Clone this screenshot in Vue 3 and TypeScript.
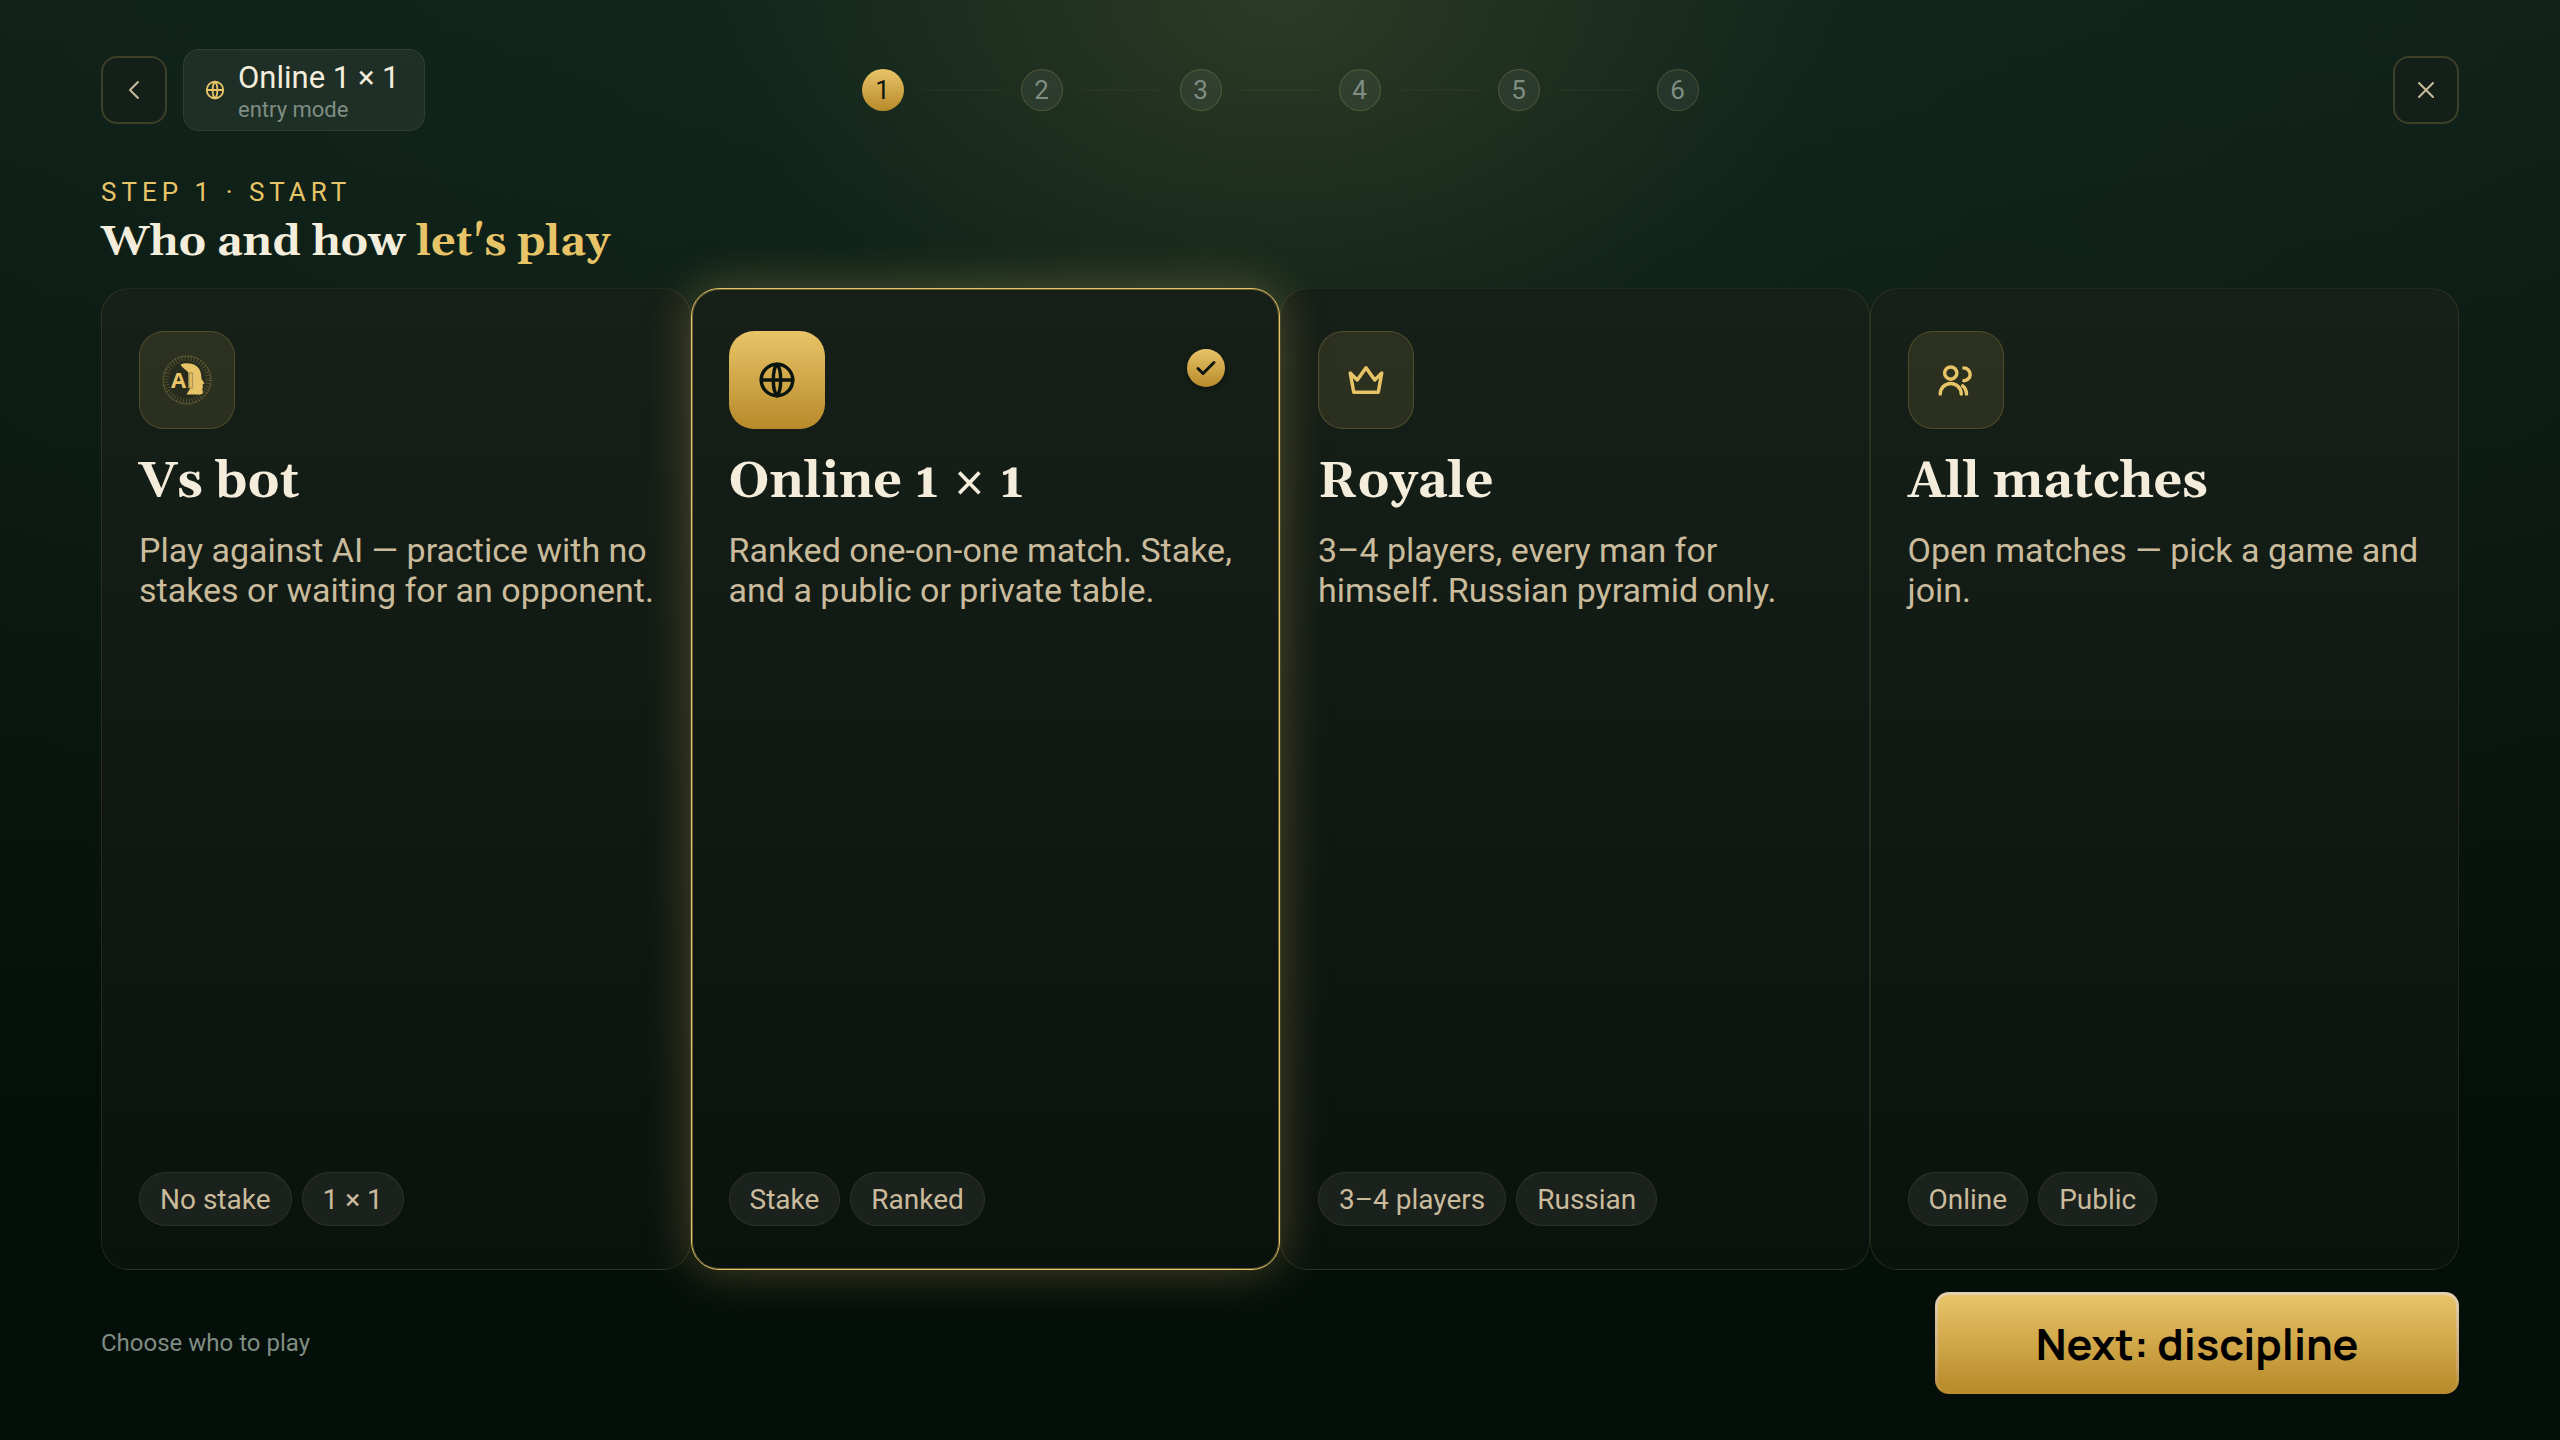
<script setup lang="ts">
import { computed, ref } from 'vue'

type IconName = 'ai' | 'globe' | 'crown' | 'users'

interface Mode {
  id: string
  icon: IconName
  title: string
  text: string
  tags: string[]
}

const modes: Mode[] = [
  {
    id: 'bot',
    icon: 'ai',
    title: 'Vs bot',
    text: 'Play against AI — practice with no stakes or waiting for an opponent.',
    tags: ['No stake', '1 × 1'],
  },
  {
    id: 'online',
    icon: 'globe',
    title: 'Online 1 × 1',
    text: 'Ranked one-on-one match. Stake, and a public or private table.',
    tags: ['Stake', 'Ranked'],
  },
  {
    id: 'royale',
    icon: 'crown',
    title: 'Royale',
    text: '3–4 players, every man for himself. Russian pyramid only.',
    tags: ['3–4 players', 'Russian'],
  },
  {
    id: 'all',
    icon: 'users',
    title: 'All matches',
    text: 'Open matches — pick a game and join.',
    tags: ['Online', 'Public'],
  },
]

const steps = [1, 2, 3, 4, 5, 6]
const currentStep = ref(1)
const selectedId = ref('online')
const selected = computed(() => modes.find((m) => m.id === selectedId.value) ?? modes[0])
</script>

<template>
  <div class="wizard">
    <header class="topbar">
      <div class="topbar-left">
        <button class="square-btn" type="button" aria-label="Back">
          <svg width="24" height="24" viewBox="0 0 24 24" class="line-icon">
            <path d="M16 4l-8 8 8 8" />
          </svg>
        </button>
        <div class="mode-chip">
          <svg width="22" height="22" viewBox="0 0 24 24" class="line-icon gold">
            <circle cx="12" cy="12" r="9" />
            <path d="M3 12h18M12 3c-3.4 3-3.4 15 0 18M12 3c3.4 3 3.4 15 0 18" />
          </svg>
          <div class="mode-chip-text">
            <span class="mode-name">{{ selected.title }}</span>
            <span class="mode-note">entry mode</span>
          </div>
        </div>
      </div>

      <ol class="stepper">
        <template v-for="step in steps" :key="step">
          <li v-if="step > 1" class="step-line" aria-hidden="true"></li>
          <li class="step" :class="{ active: step === currentStep }">{{ step }}</li>
        </template>
      </ol>

      <div class="topbar-right">
        <button class="square-btn" type="button" aria-label="Close">
          <svg width="24" height="24" viewBox="0 0 24 24" class="line-icon">
            <path d="M5 5l14 14M19 5L5 19" />
          </svg>
        </button>
      </div>
    </header>

    <div class="heading">
      <p class="eyebrow">STEP 1 · START</p>
      <h1>Who and how <span>let's play</span></h1>
    </div>

    <main class="cards">
      <button
        v-for="mode in modes"
        :key="mode.id"
        type="button"
        class="card"
        :class="{ selected: mode.id === selectedId }"
        :aria-pressed="mode.id === selectedId"
        @click="selectedId = mode.id"
      >
        <span class="tile">
          <svg v-if="mode.icon === 'ai'" width="50" height="50" viewBox="0 0 50 50">
            <circle cx="25" cy="25" r="22" class="ai-disc" />
            <circle cx="25" cy="25" r="24" class="ai-dots" />
            <circle cx="25" cy="25" r="21" class="ai-dots faint" />
            <path
              class="ai-face"
              d="M18.5 9.5C23 7.5 31 7.8 35 11.5C38.5 14.5 39.5 19 39.5 24L42.5 28.3L40.6 29.5L41 32L40.3 34L41 38.2L38.5 39.5H24.5L28.5 33H26.5V18C25 15 21.5 14.5 18.5 9.5Z"
            />
            <text x="9" y="33" class="ai-text">A</text>
            <text x="25" y="33" class="ai-text outlined">I</text>
          </svg>
          <svg v-else width="42" height="42" viewBox="0 0 24 24" class="line-icon">
            <template v-if="mode.icon === 'globe'">
              <circle cx="12" cy="12" r="9" />
              <path d="M3 12h18M12 3c-2.8 3-2.8 15 0 18M12 3c2.8 3 2.8 15 0 18" />
            </template>
            <path v-else-if="mode.icon === 'crown'" d="M3 8l4 4 5-7 5 7 4-4-2 11H5L3 8z" />
            <template v-else>
              <circle cx="9" cy="8" r="3.5" />
              <path d="M3 20a6 6 0 0 1 12 0M16.5 5.2a3.6 3.6 0 0 1 0 7.2M15.8 15.4c1.3 1 2.1 2.7 2.2 4.6" />
            </template>
          </svg>
        </span>
        <span v-if="mode.id === selectedId" class="badge">
          <svg width="24" height="24" viewBox="0 0 24 24" class="line-icon">
            <path d="M4 12.5l5 5L20 6.5" />
          </svg>
        </span>
        <span class="card-title">{{ mode.title }}</span>
        <span class="card-text">{{ mode.text }}</span>
        <span class="tags">
          <span v-for="tag in mode.tags" :key="tag" class="tag">{{ tag }}</span>
        </span>
      </button>
    </main>

    <footer class="footer">
      <p class="hint">Choose who to play</p>
      <button class="next-btn" type="button">Next: discipline</button>
    </footer>
  </div>
</template>

<style>
body {
  margin: 0;
  background: #050f0a;
}
</style>

<style scoped>
.wizard {
  --gold: #e8c468;
  --gold-deep: #b88a2a;
  --cream: #f4eddc;
  --sand: #c9bb9c;
  --muted: #7f8d83;
  box-sizing: border-box;
  min-height: 100vh;
  padding: 49px 101px 46px;
  display: flex;
  flex-direction: column;
  color: var(--cream);
  font-family: Roboto, "Liberation Sans", sans-serif;
  background:
    radial-gradient(ellipse 560px 400px at 50% 0, rgba(232, 176, 84, 0.12), transparent),
    radial-gradient(ellipse 70% 80% at 50% 0, rgba(30, 74, 54, 0.24), transparent),
    linear-gradient(180deg, #0f1f17 0%, #0b1811 35%, #050f0a 80%);
}

button {
  margin: 0;
  font: inherit;
  color: inherit;
  cursor: pointer;
}

.line-icon {
  display: block;
  fill: none;
  stroke: currentColor;
  stroke-width: 2;
  stroke-linecap: round;
  stroke-linejoin: round;
}

.gold {
  color: var(--gold);
}

.topbar {
  display: grid;
  grid-template-columns: 1fr auto 1fr;
  align-items: center;
}

.topbar-left {
  display: flex;
  align-items: center;
  gap: 16px;
}

.topbar-right {
  display: flex;
  justify-content: flex-end;
}

.square-btn {
  box-sizing: border-box;
  width: 66px;
  height: 68px;
  padding: 0;
  display: flex;
  align-items: center;
  justify-content: center;
  color: var(--sand);
  background: #131f18;
  border: 2px solid rgba(232, 196, 104, 0.2);
  border-radius: 16px;
}

.mode-chip {
  box-sizing: border-box;
  height: 82px;
  padding: 0 24px 0 20px;
  display: flex;
  align-items: center;
  gap: 12px;
  background: rgba(255, 255, 255, 0.06);
  border: 1px solid rgba(255, 255, 255, 0.08);
  border-radius: 16px;
}

.mode-chip-text {
  padding-top: 3px;
  display: flex;
  flex-direction: column;
}

.mode-name {
  font-size: 31px;
  line-height: 36px;
}

.mode-note {
  font-size: 22px;
  line-height: 28px;
  color: var(--muted);
}

.stepper {
  margin: 0;
  padding: 0;
  display: flex;
  align-items: center;
  gap: 18px;
  list-style: none;
}

.step {
  box-sizing: border-box;
  width: 42px;
  height: 42px;
  display: flex;
  align-items: center;
  justify-content: center;
  font-size: 26px;
  color: var(--muted);
  background: rgba(255, 255, 255, 0.06);
  border: 1px solid rgba(232, 196, 104, 0.2);
  border-radius: 50%;
}

.step.active {
  color: #0b1510;
  background: linear-gradient(180deg, var(--gold), var(--gold-deep));
  border: 0;
}

.step-line {
  width: 81px;
  height: 2px;
  background: rgba(232, 196, 104, 0.03);
}

.heading {
  padding: 44px 0 16px;
}

.eyebrow {
  margin: 0;
  font-size: 26px;
  line-height: 34px;
  letter-spacing: 5px;
  color: var(--gold);
}

h1 {
  margin: 5px 0 0;
  font-family: Gelasio, Georgia, "Liberation Serif", serif;
  font-size: 43px;
  line-height: 58px;
  font-weight: 700;
}

h1 span {
  color: var(--gold);
}

.cards {
  flex: 1;
  display: grid;
  grid-template-columns: repeat(4, 1fr);
}

.card {
  position: relative;
  box-sizing: border-box;
  padding: 42px 32px 43px 37px;
  display: flex;
  flex-direction: column;
  align-items: flex-start;
  text-align: left;
  background: linear-gradient(180deg, #161f18, #0a120e);
  border: 1px solid rgba(232, 196, 104, 0.12);
  border-radius: 28px;
}

.card.selected {
  z-index: 1;
  border-color: var(--gold);
  box-shadow:
    inset 0 0 0 1px rgba(232, 196, 104, 0.4),
    0 0 48px rgba(232, 196, 104, 0.3);
}

.tile {
  box-sizing: border-box;
  width: 96px;
  height: 98px;
  display: flex;
  align-items: center;
  justify-content: center;
  color: var(--gold);
  background: rgba(232, 196, 104, 0.11);
  border: 1px solid rgba(232, 196, 104, 0.2);
  border-radius: 25px;
}

.selected .tile {
  color: #0b1510;
  background: linear-gradient(180deg, var(--gold), var(--gold-deep));
  border: 0;
}

.ai-disc {
  fill: #262b1d;
}

.ai-dots {
  fill: none;
  stroke: rgba(232, 196, 104, 0.55);
  stroke-width: 1;
  stroke-dasharray: 1 1;
}

.ai-dots.faint {
  stroke: rgba(232, 196, 104, 0.24);
  stroke-width: 5;
  stroke-dasharray: 1 2;
}

.ai-face {
  fill: var(--gold);
}

.ai-text {
  fill: var(--gold);
  font-family: "Open Sans", "Liberation Sans", sans-serif;
  font-size: 22px;
  font-weight: 700;
}

.ai-text.outlined {
  stroke: #a98c48;
  stroke-width: 1;
}

.badge {
  position: absolute;
  top: 60px;
  right: 54px;
  width: 38px;
  height: 38px;
  display: flex;
  align-items: center;
  justify-content: center;
  color: #0b1510;
  background: linear-gradient(180deg, var(--gold), var(--gold-deep));
  border-radius: 50%;
  box-shadow: 0 2px 6px rgba(0, 0, 0, 0.4);
}

.badge svg {
  stroke-width: 3;
}

.card-title {
  margin-top: 24px;
  font-family: Gelasio, Georgia, "Liberation Serif", serif;
  font-size: 50px;
  line-height: 60px;
  font-weight: 700;
}

.card-text {
  margin-top: 17px;
  font-size: 34px;
  line-height: 40px;
  color: var(--sand);
}

.tags {
  margin-top: auto;
  display: flex;
  gap: 10px;
}

.tag {
  box-sizing: border-box;
  height: 54px;
  padding: 0 20px;
  display: flex;
  align-items: center;
  font-size: 28px;
  color: var(--sand);
  background: #1b211d;
  border: 1px solid rgba(232, 196, 104, 0.1);
  border-radius: 27px;
}

.footer {
  padding-top: 22px;
  display: flex;
  align-items: center;
  justify-content: space-between;
}

.hint {
  margin: 0;
  font-size: 24px;
  color: var(--muted);
}

.next-btn {
  box-sizing: border-box;
  width: 524px;
  height: 102px;
  padding: 0;
  font-family: Manrope, Inter, "Liberation Sans", sans-serif;
  font-size: 43px;
  font-weight: 700;
  color: #000;
  background:
    linear-gradient(180deg, var(--gold), var(--gold-deep)) padding-box,
    linear-gradient(180deg, #e4d0b2, #c9a468 75%, #b88a2a) border-box;
  border: 3px solid transparent;
  border-radius: 14px;
}
</style>
